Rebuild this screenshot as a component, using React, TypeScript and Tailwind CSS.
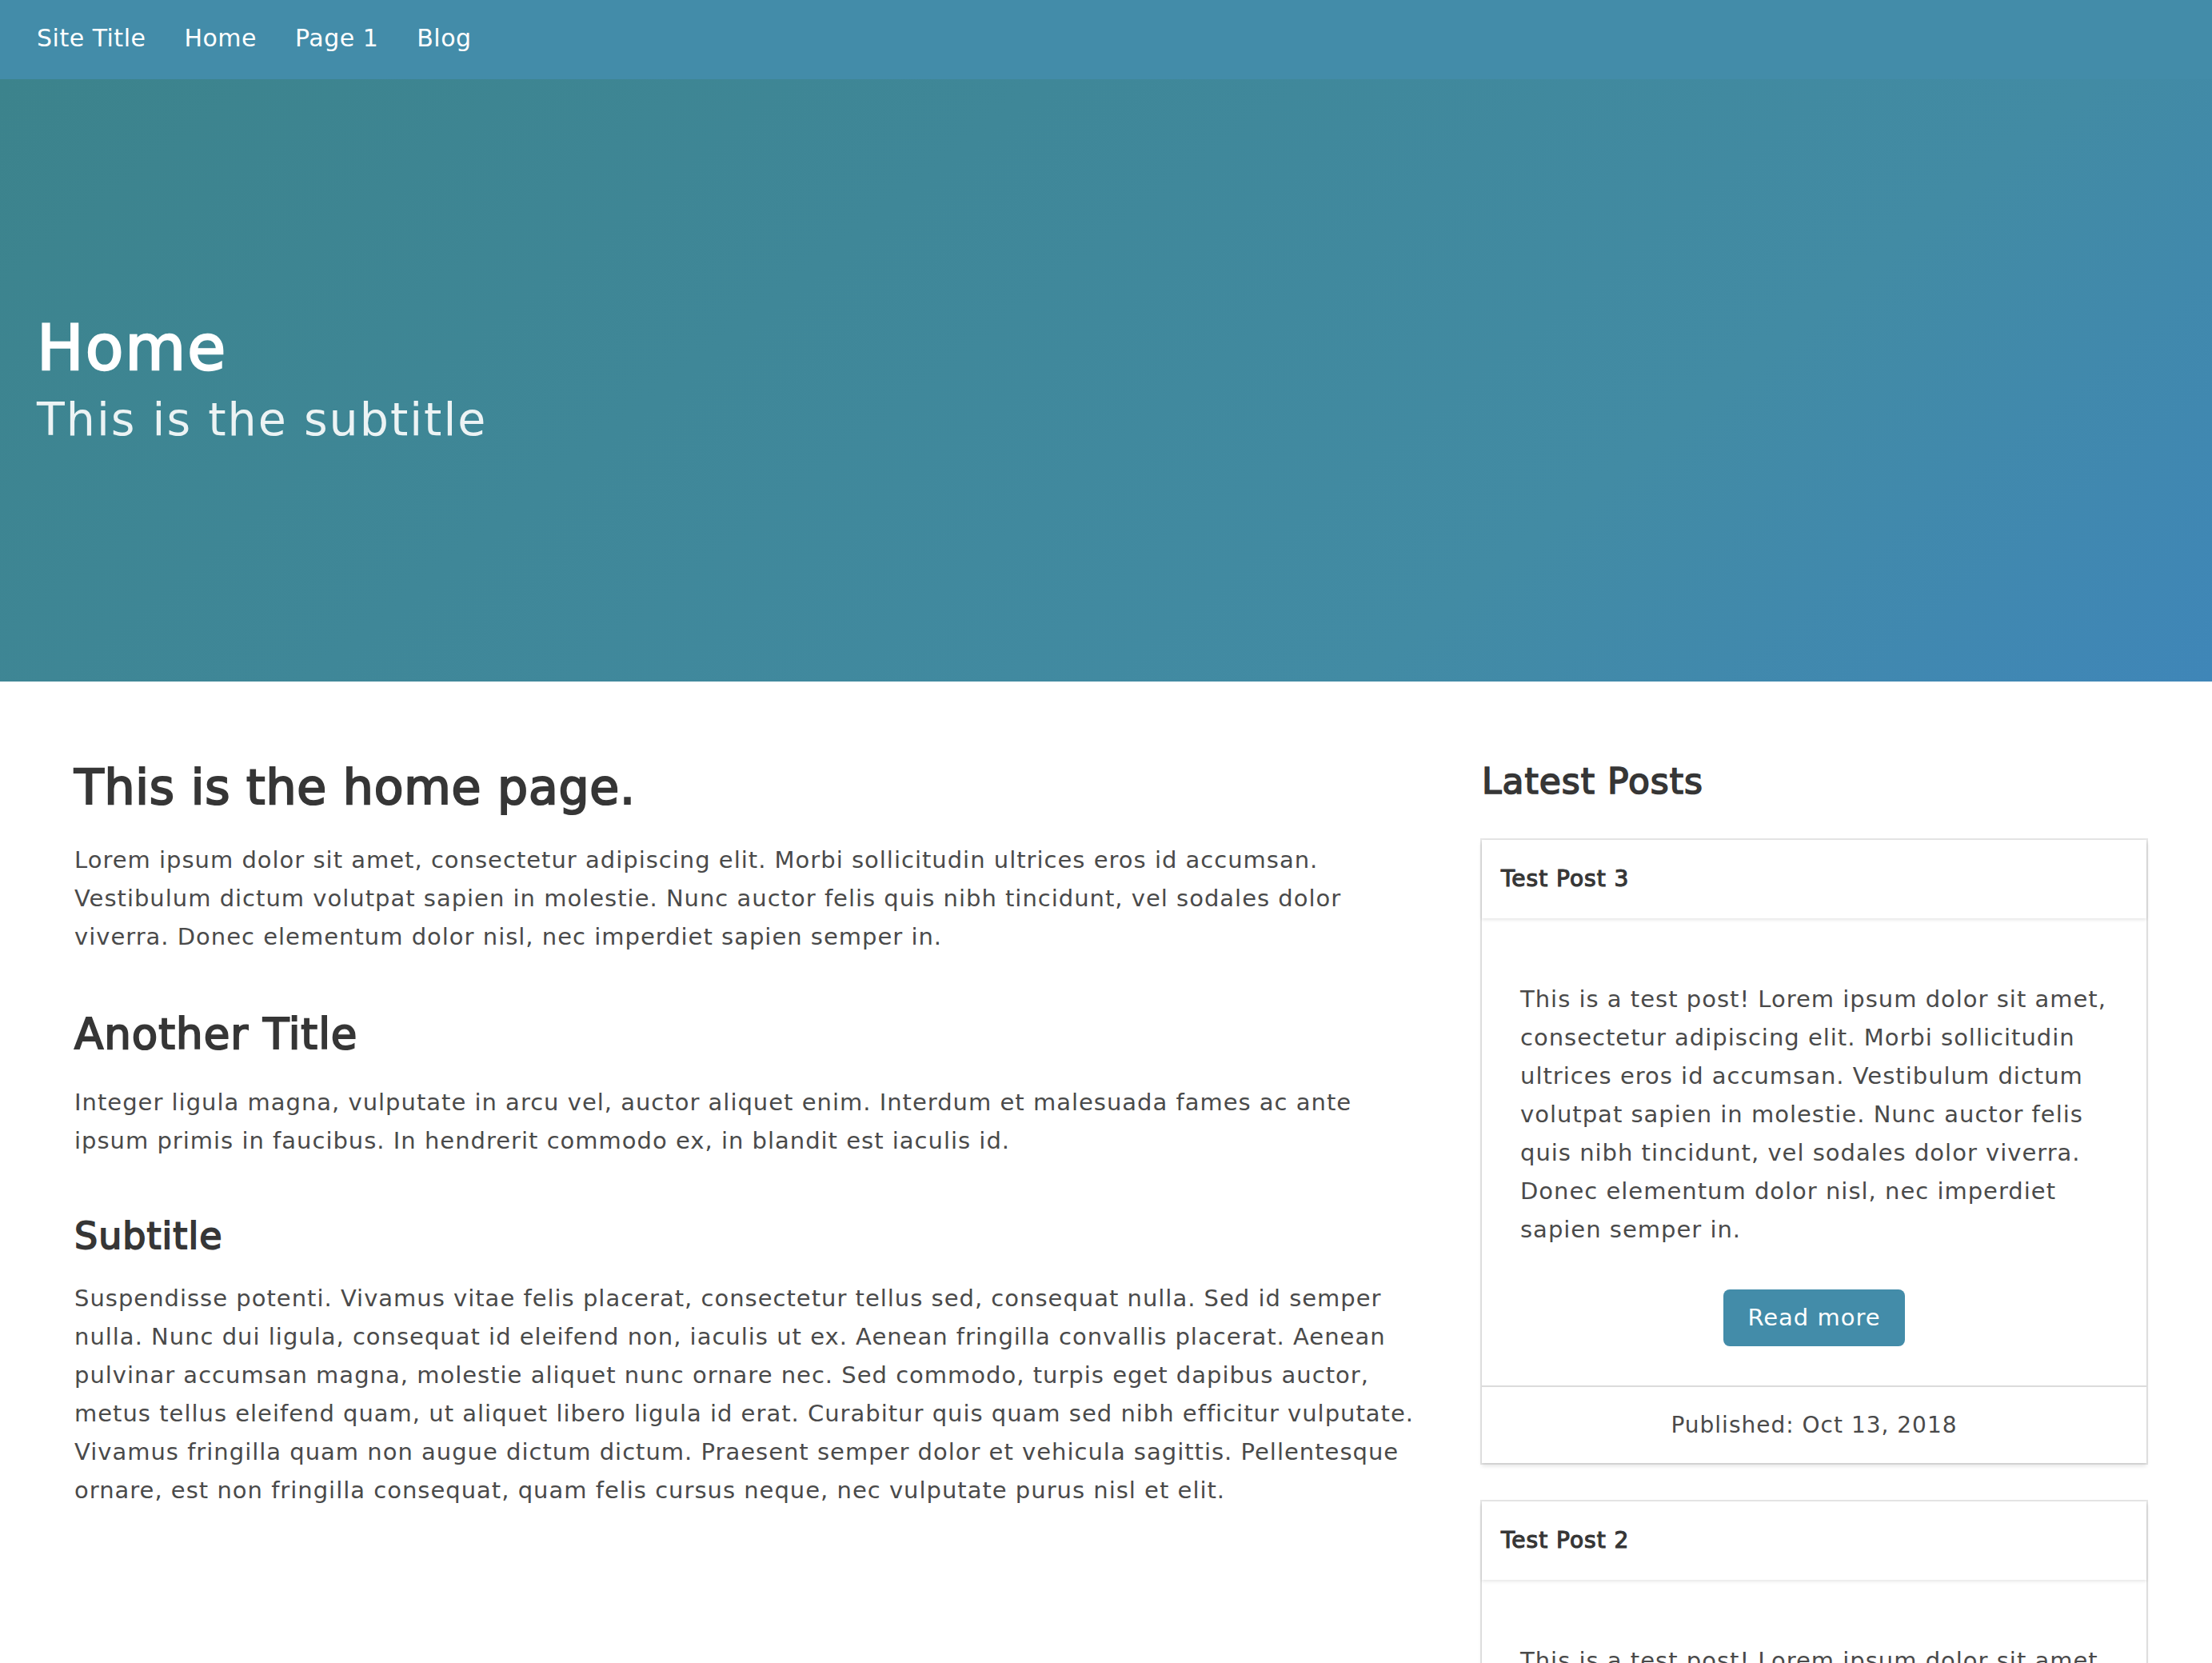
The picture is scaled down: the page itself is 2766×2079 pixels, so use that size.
import React from 'react';

const introLines: string[] = [
    'Lorem ipsum dolor sit amet, consectetur adipiscing elit. Morbi sollicitudin ultrices eros id accumsan.',
    'Vestibulum dictum volutpat sapien in molestie. Nunc auctor felis quis nibh tincidunt, vel sodales dolor',
    'viverra. Donec elementum dolor nisl, nec imperdiet sapien semper in.',
];

const anotherLines: string[] = [
    'Integer ligula magna, vulputate in arcu vel, auctor aliquet enim. Interdum et malesuada fames ac ante',
    'ipsum primis in faucibus. In hendrerit commodo ex, in blandit est iaculis id.',
];

const subtitleLines: string[] = [
    'Suspendisse potenti. Vivamus vitae felis placerat, consectetur tellus sed, consequat nulla. Sed id semper',
    'nulla. Nunc dui ligula, consequat id eleifend non, iaculis ut ex. Aenean fringilla convallis placerat. Aenean',
    'pulvinar accumsan magna, molestie aliquet nunc ornare nec. Sed commodo, turpis eget dapibus auctor,',
    'metus tellus eleifend quam, ut aliquet libero ligula id erat. Curabitur quis quam sed nibh efficitur vulputate.',
    'Vivamus fringilla quam non augue dictum dictum. Praesent semper dolor et vehicula sagittis. Pellentesque',
    'ornare, est non fringilla consequat, quam felis cursus neque, nec vulputate purus nisl et elit.',
];

const postLines: string[] = [
    'This is a test post! Lorem ipsum dolor sit amet,',
    'consectetur adipiscing elit. Morbi sollicitudin',
    'ultrices eros id accumsan. Vestibulum dictum',
    'volutpat sapien in molestie. Nunc auctor felis',
    'quis nibh tincidunt, vel sodales dolor viverra.',
    'Donec elementum dolor nisl, nec imperdiet',
    'sapien semper in.',
];

const posts = [
    { title: 'Test Post 3', date: 'Oct 13, 2018' },
    { title: 'Test Post 2', date: 'Oct 13, 2018' },
];

const Lines = ({ lines }: { lines: string[] }): React.ReactElement => (
    <>
        {lines.map((line, i) => (
            <React.Fragment key={i}>
                {line}
                {i < lines.length - 1 && <br />}
            </React.Fragment>
        ))}
    </>
);

const PostCard = ({ title, date }: { title: string; date: string }): React.ReactElement => (
    <div className="bg-white shadow-[0_4px_5px_rgba(10,10,10,0.1),0_0_0_2px_rgba(10,10,10,0.1)]">
        <header className="flex h-[98px] items-center px-[24px] shadow-[0_2px_4px_rgba(10,10,10,0.1)]">
            <p className="text-[28px] tracking-[1px] text-[#363636] [-webkit-text-stroke:1.2px_#363636]">{title}</p>
        </header>
        <div className="px-[48px] pt-[77px] pb-[49px]">
            <p className="whitespace-nowrap text-[29px] leading-[48px] tracking-[1px] text-[#4a4a4a]">
                <Lines lines={postLines} />
            </p>
            <div className="mt-[51px] flex justify-center">
                <button className="h-[71px] w-[227px] rounded-[8px] bg-[#438ca9] text-[29px] tracking-[1px] text-white">
                    Read more
                </button>
            </div>
        </div>
        <footer className="flex h-[97px] items-center justify-center border-t-2 border-[#dbdbdb] text-[28px] tracking-[1px] text-[#4a4a4a]">
            Published: {date}
        </footer>
    </div>
);

const App: React.FC = (): React.ReactElement => {
    const navItems = ['Site Title', 'Home', 'Page 1', 'Blog'];

    return (
        <div className="min-h-screen bg-white font-['DejaVu_Sans',sans-serif]">
            {/* navbar */}
            <nav className="flex h-[99px] items-center bg-[#438ca9] pl-[22px] pb-[4px]">
                {navItems.map((item) => (
                    <a key={item} className="px-[24px] text-[30px] tracking-[0.5px] text-white" href="#">
                        {item}
                    </a>
                ))}
            </nav>

            {/* hero */}
            <section className="bg-[linear-gradient(141deg,#3c838c_0%,#428ba4_71%,#3f86b8_100%)] pt-[297px] pb-[294px] pl-[46px]">
                <h1 className="text-[78px] leading-[78px] tracking-[2px] text-white [-webkit-text-stroke:2.4px_white]">
                    Home
                </h1>
                <h2 className="mt-[16px] text-[57px] leading-[68px] tracking-[2px] text-white/90">
                    This is the subtitle
                </h2>
            </section>

            {/* content */}
            <section className="flex pt-[100px] pl-[93px]">
                <main className="w-[1713px] shrink-0 text-[#4a4a4a]">
                    <h1 className="text-[60px] leading-[64px] tracking-[0.8px] text-[#363636] [-webkit-text-stroke:2.2px_#363636]">
                        This is the home page.
                    </h1>
                    <p className="mt-[35px] whitespace-nowrap text-[29px] leading-[48px] tracking-[1px]">
                        <Lines lines={introLines} />
                    </p>
                    <h2 className="mt-[69px] text-[53px] leading-[58px] tracking-[1px] text-[#363636] [-webkit-text-stroke:2px_#363636]">
                        Another Title
                    </h2>
                    <p className="mt-[32px] whitespace-nowrap text-[29px] leading-[48px] tracking-[1px]">
                        <Lines lines={anotherLines} />
                    </p>
                    <h3 className="mt-[70px] text-[46px] leading-[50px] tracking-[1px] text-[#363636] [-webkit-text-stroke:1.8px_#363636]">
                        Subtitle
                    </h3>
                    <p className="mt-[29px] whitespace-nowrap text-[29px] leading-[48px] tracking-[1px]">
                        <Lines lines={subtitleLines} />
                    </p>
                </main>

                <aside className="ml-[47px] w-[831px] shrink-0">
                    <h2 className="mt-[1px] text-[44px] leading-[48px] tracking-[1px] text-[#363636] [-webkit-text-stroke:1.7px_#363636]">
                        Latest Posts
                    </h2>
                    <div className="mt-[49px] flex flex-col gap-[48px] pb-[60px]">
                        {posts.map((post) => (
                            <PostCard key={post.title} title={post.title} date={post.date} />
                        ))}
                    </div>
                </aside>
            </section>
        </div>
    );
};

export default App;
